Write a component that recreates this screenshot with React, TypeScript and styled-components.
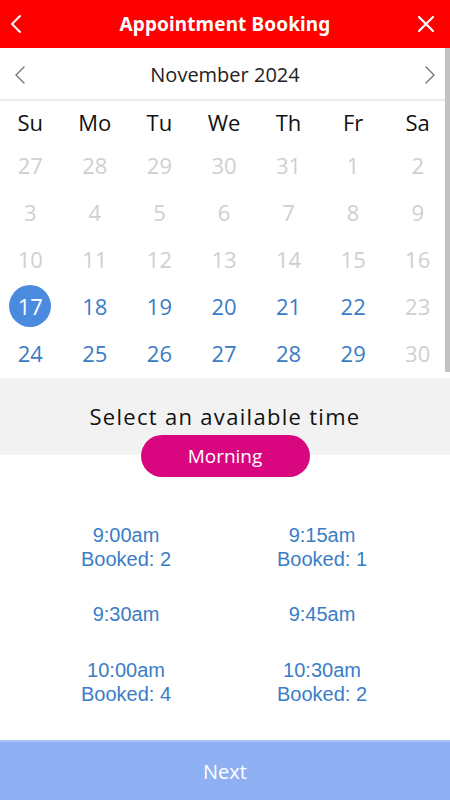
import React from "react";
import styled, { createGlobalStyle } from "styled-components";

const Global = createGlobalStyle`
  html, body { margin: 0; padding: 0; background: #fff; }
  body { font-family: "Open Sans", sans-serif; }
  * { box-sizing: border-box; }
`;

const Page = styled.div`
  width: 450px;
  height: 800px;
  display: flex;
  flex-direction: column;
  overflow: hidden;
  background: #fff;
`;

const Header = styled.header`
  height: 48px;
  flex: none;
  background: #fe0000;
  display: grid;
  grid-template-columns: 48px 1fr 48px;
  align-items: center;
`;

const HeaderButton = styled.div<{ $side: "left" | "right" }>`
  display: flex;
  align-items: center;
  justify-content: ${(p) => (p.$side === "left" ? "flex-start" : "center")};
  padding-left: ${(p) => (p.$side === "left" ? "9px" : "0")};
  height: 48px;
  color: #fff;
`;

const Title = styled.h1`
  margin: 0;
  text-align: center;
  color: #fff;
  font-family: "Noto Sans", sans-serif;
  font-weight: 700;
  font-size: 19px;
  letter-spacing: 0.1px;
`;

const CalendarPanel = styled.section`
  position: relative;
  display: flex;
  flex-direction: column;
  flex: none;
  height: 330px;
`;

const Scrollbar = styled.div`
  position: absolute;
  top: 0;
  right: 0;
  width: 5px;
  height: 324px;
  background: #c2c2c2;
`;

const MonthBar = styled.div`
  height: 53px;
  display: grid;
  grid-template-columns: 40px 1fr 40px;
  align-items: center;
  border-bottom: 2px solid #ebebeb;
`;

const MonthLabel = styled.div`
  text-align: center;
  font-size: 20px;
  color: #222;
  padding-top: 2px;
`;

const Chevron = styled.div`
  display: flex;
  justify-content: center;
  align-items: center;
  padding-top: 2px;
`;

const WeekGrid = styled.div`
  display: grid;
  grid-template-columns: repeat(7, 1fr);
  margin-left: -2px;
`;

const WeekDay = styled.div`
  height: 40px;
  display: flex;
  align-items: center;
  justify-content: center;
  padding-top: 2px;
  font-size: 22px;
  color: #111;
`;

const DayCell = styled.div<{ $state: "off" | "on" | "sel" }>`
  height: 47px;
  display: flex;
  align-items: center;
  justify-content: center;
  font-size: 22px;
  color: ${(p) => (p.$state === "off" ? "#cfcfcf" : p.$state === "on" ? "#3a7cc4" : "#fff")};
`;

const Selected = styled.span`
  width: 42px;
  height: 42px;
  border-radius: 50%;
  background: #4a8be0;
  color: #fff;
  display: flex;
  align-items: center;
  justify-content: center;
`;

const TimeHeader = styled.div`
  flex: none;
  height: 77px;
  background: #f2f2f2;
  display: flex;
  align-items: center;
  justify-content: center;
  padding-bottom: 1px;
`;

const TimeTitle = styled.div`
  font-size: 22px;
  letter-spacing: 1.3px;
  color: #111;
`;

const PillRow = styled.div`
  display: flex;
  justify-content: center;
  margin-top: -20px;
  flex: none;
`;

const Pill = styled.div`
  width: 169px;
  height: 42px;
  border-radius: 21px;
  background: #d8067f;
  color: #fff;
  font-size: 19px;
  display: flex;
  align-items: center;
  justify-content: center;
`;

const Slots = styled.div`
  display: grid;
  grid-template-columns: 196px 196px;
  grid-auto-rows: 67.5px;
  padding: 36px 30px 0 28px;
  flex: 1;
`;

const Slot = styled.div`
  display: flex;
  flex-direction: column;
  align-items: center;
  justify-content: center;
  font-family: "Liberation Sans", Arial, sans-serif;
  font-size: 20px;
  line-height: 24px;
  color: #3a7dc6;
`;

const NextButton = styled.div`
  flex: none;
  height: 60px;
  background: #8eb0f2;
  border-top: 2px solid #a9c3f5;
  color: #fff;
  font-size: 20px;
  display: flex;
  align-items: center;
  justify-content: center;
`;

const weekdays = ["Su", "Mo", "Tu", "We", "Th", "Fr", "Sa"];

type Cell = { d: number; s: "off" | "on" | "sel" };
const days: Cell[] = [
  ...[27, 28, 29, 30, 31].map((d) => ({ d, s: "off" as const })),
  ...Array.from({ length: 16 }, (_, i) => ({ d: i + 1, s: "off" as const })),
  { d: 17, s: "sel" },
  ...[18, 19, 20, 21, 22].map((d) => ({ d, s: "on" as const })),
  { d: 23, s: "off" },
  ...[24, 25, 26, 27, 28, 29].map((d) => ({ d, s: "on" as const })),
  { d: 30, s: "off" },
];

const slots = [
  { t: "9:00am", b: 2 },
  { t: "9:15am", b: 1 },
  { t: "9:30am" },
  { t: "9:45am" },
  { t: "10:00am", b: 4 },
  { t: "10:30am", b: 2 },
];

export default function App() {
  return (
    <Page>
      <Global />
      <Header>
        <HeaderButton $side="left">
          <svg width="14" height="20" viewBox="0 0 14 20" fill="none" stroke="#fff" strokeWidth="2" strokeLinecap="round" strokeLinejoin="round">
            <path d="M11 2 L3 10 L11 18" />
          </svg>
        </HeaderButton>
        <Title>Appointment Booking</Title>
        <HeaderButton $side="right">
          <svg width="18" height="18" viewBox="0 0 18 18" fill="none" stroke="#fff" strokeWidth="2.2" strokeLinecap="round">
            <path d="M2 2 L16 16 M16 2 L2 16" />
          </svg>
        </HeaderButton>
      </Header>
      <CalendarPanel>
        <MonthBar>
          <Chevron>
            <svg width="12" height="20" viewBox="0 0 12 20" fill="none" stroke="#777" strokeWidth="1.4" strokeLinecap="round">
              <path d="M10 2 L2 10 L10 18" />
            </svg>
          </Chevron>
          <MonthLabel>November 2024</MonthLabel>
          <Chevron>
            <svg width="12" height="20" viewBox="0 0 12 20" fill="none" stroke="#777" strokeWidth="1.4" strokeLinecap="round">
              <path d="M2 2 L10 10 L2 18" />
            </svg>
          </Chevron>
        </MonthBar>
        <WeekGrid>
          {weekdays.map((w) => (
            <WeekDay key={w}>{w}</WeekDay>
          ))}
          {days.map((c, i) => (
            <DayCell key={i} $state={c.s}>
              {c.s === "sel" ? <Selected>{c.d}</Selected> : c.d}
            </DayCell>
          ))}
        </WeekGrid>
        <Scrollbar />
      </CalendarPanel>
      <TimeHeader>
        <TimeTitle>Select an available time</TimeTitle>
      </TimeHeader>
      <PillRow>
        <Pill>Morning</Pill>
      </PillRow>
      <Slots>
        {slots.map((s) => (
          <Slot key={s.t}>
            <span>{s.t}</span>
            {s.b !== undefined && <span>Booked: {s.b}</span>}
          </Slot>
        ))}
      </Slots>
      <NextButton>Next</NextButton>
    </Page>
  );
}
